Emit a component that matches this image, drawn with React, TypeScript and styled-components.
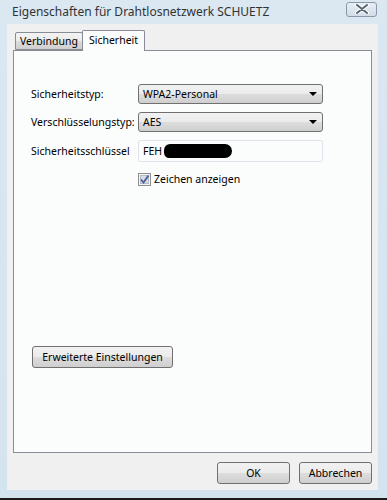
import styled, { createGlobalStyle } from "styled-components";

const GlobalStyle = createGlobalStyle`
  body {
    margin: 0;
    font-family: "Noto Sans", "Liberation Sans", sans-serif;
    font-size: 10.5px;
    color: #000;
  }
`;

const Window = styled.div`
  width: 387px;
  height: 500px;
  box-sizing: border-box;
  background: linear-gradient(180deg, #dbe7f1 0%, #d4e4ef 100%);
  border-bottom: 2px solid #1a1a1a;
  padding: 0 9px 8px 7px;
  display: flex;
  flex-direction: column;
  overflow: hidden;
`;

const TitleBar = styled.div`
  height: 24px;
  display: flex;
  align-items: center;
  justify-content: space-between;
  padding-left: 5px;
`;

const Title = styled.div`
  font-size: 12px;
  color: #333;
  margin-top: -2px;
`;

const CloseButton = styled.div`
  width: 29px;
  height: 13px;
  margin-top: -6px;
  margin-right: 1px;
  border: 1px solid #8a99aa;
  border-radius: 3px;
  background: linear-gradient(180deg, #e6eef5 0%, #d2dde8 100%);
  display: flex;
  align-items: center;
  justify-content: center;
`;

const Client = styled.div`
  flex: 1;
  background: #f0f0f0;
  padding: 7px 6px 0 6px;
  display: flex;
  flex-direction: column;
`;

const TabStrip = styled.div`
  display: flex;
  align-items: flex-end;
  height: 19px;
  padding-left: 2px;
  position: relative;
  z-index: 1;
`;

const Tab = styled.div<{ $active?: boolean }>`
  box-sizing: border-box;
  height: ${(p) => (p.$active ? "21px" : "18px")};
  margin-bottom: ${(p) => (p.$active ? "-1px" : "0")};
  padding: 0 ${(p) => (p.$active ? "6px" : "4px")};
  border: 1px solid #898c95;
  border-bottom: ${(p) => (p.$active ? "none" : "1px solid #898c95")};
  border-radius: 2px 2px 0 0;
  background: ${(p) =>
    p.$active
      ? "#fbfcfc"
      : "linear-gradient(180deg, #f3f3f3 0%, #ebebeb 50%, #dcdcdc 51%, #cfcfcf 100%)"};
  margin-left: ${(p) => (p.$active ? "-1px" : "0")};
  display: flex;
  align-items: ${(p) => (p.$active ? "flex-start" : "center")};
  padding-top: ${(p) => (p.$active ? "2px" : "0")};
  font-size: 10.5px;
`;

const Panel = styled.div`
  height: 403px;
  box-sizing: border-box;
  border: 1px solid #898c95;
  background: #fbfcfc;
  padding: 33px 0 84px 17px;
  display: flex;
  flex-direction: column;
`;

const Form = styled.div`
  display: grid;
  grid-template-columns: 107px 185px;
  row-gap: 8px;
  align-items: center;
`;

const Label = styled.div`
  font-size: 10.5px;
`;

const Select = styled.div`
  box-sizing: border-box;
  height: 20px;
  border: 1px solid #707070;
  border-radius: 3px;
  background: linear-gradient(180deg, #f2f2f2 0%, #ebebeb 50%, #dddddd 51%, #cfcfcf 100%);
  display: flex;
  align-items: center;
  justify-content: space-between;
  padding: 0 5px 0 4px;
  font-size: 10.5px;
`;

const Arrow = styled.div`
  width: 0;
  height: 0;
  border-left: 4px solid transparent;
  border-right: 4px solid transparent;
  border-top: 4px solid #000;
`;

const KeyField = styled.div`
  box-sizing: border-box;
  height: 22px;
  border: 1px solid #e2e3ea;
  border-radius: 2px;
  background: #fbfcfc;
  display: flex;
  align-items: center;
  padding-left: 4px;
  font-size: 10.5px;
`;

const Redaction = styled.div`
  width: 68px;
  height: 14px;
  margin-left: 2px;
  background: #000;
  border-radius: 7px 8px 8px 6px;
`;

const CheckRow = styled.label`
  grid-column: 2;
  display: flex;
  align-items: center;
  gap: 3px;
  margin-top: 2px;
  font-size: 10.5px;
`;

const ActionButton = styled.button<{ $width: number }>`
  width: ${(p) => p.$width}px;
  height: 22px;
  border: 1px solid #707070;
  border-radius: 3px;
  background: linear-gradient(180deg, #f2f2f2 0%, #ebebeb 50%, #dddddd 51%, #cfcfcf 100%);
  font-family: inherit;
  font-size: 10.5px;
  color: #000;
  padding: 0;
`;

const AdvancedButton = styled(ActionButton)`
  margin-top: auto;
  margin-left: 1px;
`;

const Footer = styled.div`
  display: flex;
  justify-content: flex-end;
  gap: 9px;
  padding-top: 9px;
`;

const CloseGlyph = () => (
  <svg width="14" height="10" viewBox="0 0 14 10">
    <path
      d="M2 1 L12 9 M12 1 L2 9"
      stroke="#fff"
      strokeWidth="4"
      strokeLinecap="round"
    />
    <path
      d="M2 1 L12 9 M12 1 L2 9"
      stroke="#5a6470"
      strokeWidth="2"
      strokeLinecap="round"
    />
  </svg>
);

const CheckBox = () => (
  <svg width="13" height="13" viewBox="0 0 13 13">
    <rect x="0.5" y="0.5" width="12" height="12" fill="#f4f4f4" stroke="#8f8f8f" />
    <rect x="2.5" y="2.5" width="8" height="8" fill="#d6dbe6" stroke="#b4bccb" />
    <path d="M3 6.5 L5.5 9.5 L10.5 2.5" fill="none" stroke="#4a5f97" strokeWidth="1.8" />
  </svg>
);

export default function App() {
  return (
    <>
      <GlobalStyle />
      <Window>
        <TitleBar>
          <Title>Eigenschaften für Drahtlosnetzwerk SCHUETZ</Title>
          <CloseButton>
            <CloseGlyph />
          </CloseButton>
        </TitleBar>
        <Client>
          <TabStrip>
            <Tab>Verbindung</Tab>
            <Tab $active>Sicherheit</Tab>
          </TabStrip>
          <Panel>
            <Form>
              <Label>Sicherheitstyp:</Label>
              <Select>
                WPA2-Personal
                <Arrow />
              </Select>
              <Label>Verschlüsselungstyp:</Label>
              <Select>
                AES
                <Arrow />
              </Select>
              <Label>Sicherheitsschlüssel</Label>
              <KeyField>
                FEH
                <Redaction />
              </KeyField>
              <CheckRow>
                <CheckBox />
                Zeichen anzeigen
              </CheckRow>
            </Form>
            <AdvancedButton $width={141}>Erweiterte Einstellungen</AdvancedButton>
          </Panel>
          <Footer>
            <ActionButton $width={73}>OK</ActionButton>
            <ActionButton $width={73}>Abbrechen</ActionButton>
          </Footer>
        </Client>
      </Window>
    </>
  );
}
